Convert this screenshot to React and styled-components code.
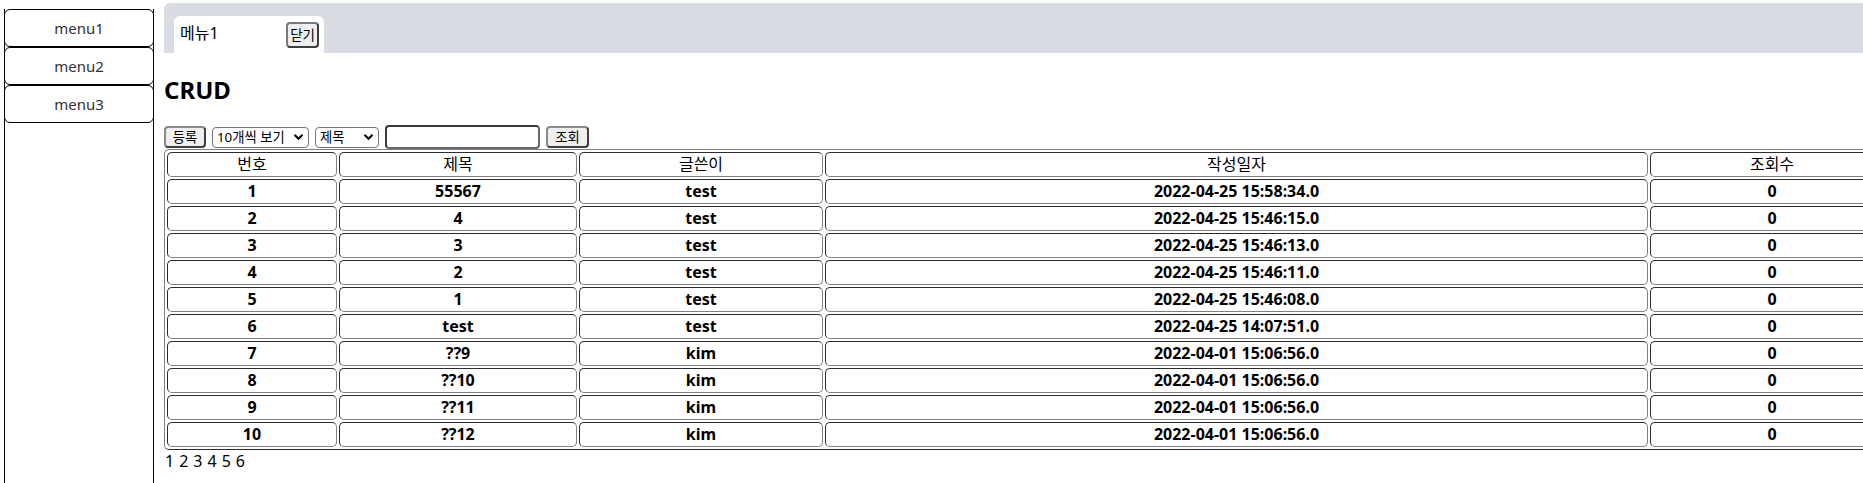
import React from "react";
import styled, { createGlobalStyle } from "styled-components";

const Global = createGlobalStyle`
  html, body { margin: 0; padding: 0; background: #fff; overflow: hidden; }
  body { font-family: "Noto Sans", "Noto Sans CJK KR", sans-serif; color: #000; }
  * { box-sizing: border-box; }
`;

const Page = styled.div`
  display: flex;
  align-items: flex-start;
  gap: 10px;
  padding: 3px 0 0 4px;
  width: max-content;
`;

const Sidebar = styled.nav`
  width: 150px;
  flex-shrink: 0;
  margin-top: 6px;
  min-height: 100vh;
  border-left: 1px solid #000;
  border-right: 1px solid #000;
  display: flex;
  flex-direction: column;
`;

const MenuButton = styled.div`
  margin: 0 -1px;
  height: 38px;
  border: 1px solid #000;
  border-radius: 6px;
  background: #fff;
  display: flex;
  align-items: center;
  justify-content: center;
  font-size: 15px;
  color: #333;
  padding-bottom: 1px;
`;

const Main = styled.main`
  width: 1733px;
  flex-shrink: 0;
  display: flex;
  flex-direction: column;
  align-items: flex-start;
`;

const TabBar = styled.div`
  align-self: stretch;
  height: 50px;
  background: #d9dce3;
  border-radius: 6px 6px 0 0;
  padding: 13px 0 0 10px;
  display: flex;
  align-items: flex-end;
`;

const Tab = styled.div`
  width: 150px;
  height: 37px;
  background: #fff;
  border-radius: 6px 6px 0 0;
  display: flex;
  align-items: center;
  justify-content: space-between;
  padding: 0 5px 3px 6px;
  font-size: 16px;
  line-height: 20px;
`;

const CloseButton = styled.button`
  font-family: "Noto Sans", "Noto Sans CJK KR", sans-serif;
  font-size: 13.5px;
  line-height: 18px;
  height: 26px;
  padding: 0 2px;
  background: #efefef;
  color: #000;
  border: 2px solid;
  border-color: #7a7a7a #3e3e3e #3e3e3e #7a7a7a;
  border-radius: 4px;
  margin-top: 4px;
`;

const Title = styled.h2`
  margin: 23px 0 21px;
  font-size: 24px;
  line-height: 28px;
  font-weight: 700;
`;

const Toolbar = styled.div`
  display: flex;
  align-items: center;
  gap: 6px;
  height: 24px;
`;

const ToolButton = styled.button`
  font-family: "Noto Sans", "Noto Sans CJK KR", sans-serif;
  font-size: 13.33px;
  line-height: 16px;
  height: 22px;
  padding: 0 6px;
  width: ${(p) => p.$w}px;
  background: #efefef;
  color: #000;
  border: 2px solid;
  border-color: #8a8a8a #3e3e3e #3e3e3e #8a8a8a;
  border-radius: 4px;
`;

const SelectWrap = styled.span`
  position: relative;
  display: inline-flex;
  width: ${(p) => p.$w}px;
  height: 21px;
`;

const Select = styled.select`
  appearance: none;
  width: 100%;
  height: 100%;
  font-family: "Noto Sans", "Noto Sans CJK KR", sans-serif;
  font-size: 13.33px;
  line-height: 16px;
  padding: 0 0 0 4px;
  color: #000;
  background: #fff;
  border: 1px solid #767676;
  border-radius: 4px;
`;

const Chevron = styled.svg`
  position: absolute;
  right: 5px;
  top: 6px;
  width: 11px;
  height: 8px;
  pointer-events: none;
`;

const SearchInput = styled.input`
  width: 155px;
  height: 24px;
  border: 2px solid;
  border-color: #3a3a3a #6a6a6a #6a6a6a #3a3a3a;
  border-radius: 4px;
  padding: 0 4px;
  background: #fff;
`;

const Table = styled.table`
  width: 1733px;
  border: 1px outset grey;
  border-radius: 5px;
  border-spacing: 2px;
  table-layout: fixed;
`;

const Th = styled.th`
  border: 1px inset grey;
  border-radius: 5px;
  padding: 1px;
  font-size: 16px;
  line-height: 21px;
  font-weight: 400;
  text-align: center;
`;

const Td = styled.td`
  border: 1px inset grey;
  border-radius: 5px;
  padding: 1px;
  font-size: 16px;
  line-height: 21px;
  font-weight: 700;
  text-align: center;
`;

const Pager = styled.div`
  display: flex;
  gap: 5px;
  font-size: 16px;
  line-height: 22px;
  margin-left: 1px;
`;

const Chev = () => (
  <Chevron viewBox="0 0 11 8">
    <path d="M1.5 1.8 L5.5 5.8 L9.5 1.8" fill="none" stroke="#000" strokeWidth="2" />
  </Chevron>
);

const rows = [
  [1, "55567", "test", "2022-04-25 15:58:34.0", 0],
  [2, "4", "test", "2022-04-25 15:46:15.0", 0],
  [3, "3", "test", "2022-04-25 15:46:13.0", 0],
  [4, "2", "test", "2022-04-25 15:46:11.0", 0],
  [5, "1", "test", "2022-04-25 15:46:08.0", 0],
  [6, "test", "test", "2022-04-25 14:07:51.0", 0],
  [7, "??9", "kim", "2022-04-01 15:06:56.0", 0],
  [8, "??10", "kim", "2022-04-01 15:06:56.0", 0],
  [9, "??11", "kim", "2022-04-01 15:06:56.0", 0],
  [10, "??12", "kim", "2022-04-01 15:06:56.0", 0],
];

const widths = [170, 238, 244, 823, 244];

export default function App() {
  return (
    <>
      <Global />
      <Page>
        <Sidebar>
          <MenuButton>menu1</MenuButton>
          <MenuButton>menu2</MenuButton>
          <MenuButton>menu3</MenuButton>
        </Sidebar>
        <Main>
          <TabBar>
            <Tab>
              <span>메뉴1</span>
              <CloseButton>닫기</CloseButton>
            </Tab>
          </TabBar>
          <Title>CRUD</Title>
          <Toolbar>
            <ToolButton $w={42}>등록</ToolButton>
            <SelectWrap $w={97}>
              <Select defaultValue="10">
                <option value="10">10개씩 보기</option>
              </Select>
              <Chev />
            </SelectWrap>
            <SelectWrap $w={64}>
              <Select defaultValue="title">
                <option value="title">제목</option>
              </Select>
              <Chev />
            </SelectWrap>
            <SearchInput type="text" />
            <ToolButton $w={43}>조회</ToolButton>
          </Toolbar>
          <Table>
            <colgroup>
              {widths.map((w, i) => (
                <col key={i} style={{ width: w }} />
              ))}
            </colgroup>
            <thead>
              <tr>
                <Th>번호</Th>
                <Th>제목</Th>
                <Th>글쓴이</Th>
                <Th>작성일자</Th>
                <Th>조회수</Th>
              </tr>
            </thead>
            <tbody>
              {rows.map((r) => (
                <tr key={r[0]}>
                  {r.map((c, i) => (
                    <Td key={i}>{c}</Td>
                  ))}
                </tr>
              ))}
            </tbody>
          </Table>
          <Pager>
            {[1, 2, 3, 4, 5, 6].map((n) => (
              <span key={n}>{n}</span>
            ))}
          </Pager>
        </Main>
      </Page>
    </>
  );
}
